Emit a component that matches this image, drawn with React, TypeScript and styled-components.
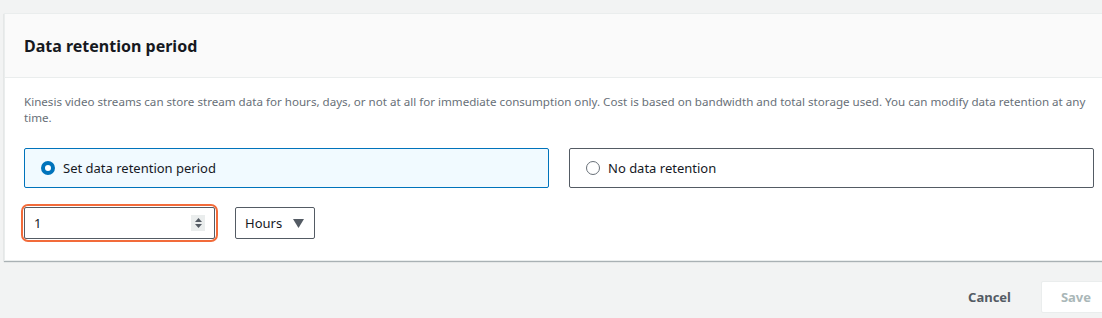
import React from 'react'
import styled, { createGlobalStyle } from 'styled-components'

const GlobalStyle = createGlobalStyle`
  html, body {
    margin: 0;
    padding: 0;
    background: #f2f3f3;
    overflow: hidden;
  }
  body {
    font-family: "Noto Sans", "Open Sans", sans-serif;
    color: #16191f;
  }
`

const App = () => {
  return (
    <Page>
      <GlobalStyle />
      <Card>
        <CardHeader>
          <Title>Data retention period</Title>
        </CardHeader>
        <CardBody>
          <Description>
            Kinesis video streams can store stream data for hours, days, or not at all for immediate
            consumption only. Cost is based on bandwidth and total storage used. You can modify data
            retention at any time.
          </Description>
          <Tiles>
            <Tile selected>
              <Radio selected />
              <TileLabel>Set data retention period</TileLabel>
            </Tile>
            <Tile>
              <Radio />
              <TileLabel>No data retention</TileLabel>
            </Tile>
          </Tiles>
          <Controls>
            <FocusRing>
              <NumberBox>
                <NumberValue>1</NumberValue>
                <Spinner>
                  <svg width="9" height="12" viewBox="0 0 9 12">
                    <path d="M4.5 1 L8 5 H1 Z" fill="#545b64" />
                    <path d="M4.5 11 L8 7 H1 Z" fill="#545b64" />
                  </svg>
                </Spinner>
              </NumberBox>
            </FocusRing>
            <Select>
              <span>Hours</span>
              <svg width="11" height="9" viewBox="0 0 11 9">
                <path d="M0 0 H11 L5.5 9 Z" fill="#545b64" />
              </svg>
            </Select>
          </Controls>
        </CardBody>
      </Card>
      <Footer>
        <CancelButton>Cancel</CancelButton>
        <SaveButton>Save</SaveButton>
      </Footer>
    </Page>
  )
}

export default App

const Page = styled.div`
  width: 1102px;
  height: 318px;
  padding: 13px 0 0 4px;
  box-sizing: border-box;
  overflow: hidden;
`

const Card = styled.div`
  width: 1109px;
  background: #fff;
  border: 1px solid #eaeded;
  border-right: none;
  box-shadow: 0 1px 1px 0 rgba(0, 28, 36, 0.3);
  box-sizing: border-box;
`

const CardHeader = styled.div`
  height: 64px;
  background: #fafafa;
  border-bottom: 1px solid #eaeded;
  display: flex;
  align-items: center;
  padding: 0 19px;
  box-sizing: border-box;
`

const Title = styled.h2`
  margin: 0;
  font-size: 16px;
  font-weight: 700;
  color: #16191f;
  padding-top: 1px;
`

const CardBody = styled.div`
  padding: 16px 19px 18px 19px;
`

const Description = styled.p`
  margin: 0;
  font-size: 11.6px;
  line-height: 16px;
  color: #687078;
  width: 1072px;
`

const Tiles = styled.div`
  display: grid;
  grid-template-columns: 1fr 1fr;
  gap: 20px;
  margin-top: 22px;
  width: 1070px;
`

const Tile = styled.div<{ selected?: boolean }>`
  height: 40px;
  box-sizing: border-box;
  border: 1px solid ${(p) => (p.selected ? '#0073bb' : '#545b64')};
  background: ${(p) => (p.selected ? '#f1faff' : '#fff')};
  border-radius: 2px;
  display: flex;
  align-items: center;
  padding-left: 16px;
  gap: 8px;
`

const Radio = styled.span<{ selected?: boolean }>`
  width: 14px;
  height: 14px;
  border-radius: 50%;
  box-sizing: border-box;
  border: ${(p) => (p.selected ? '4px solid #0073bb' : '1px solid #687078')};
  background: #fff;
  flex-shrink: 0;
`

const TileLabel = styled.span`
  font-size: 13px;
  color: #16191f;
`

const Controls = styled.div`
  display: flex;
  align-items: center;
  gap: 17px;
  margin-top: 16px;
`

const FocusRing = styled.div`
  padding: 1px;
  border: 2px solid #f26b3a;
  border-radius: 7px;
  margin-left: -3px;
`

const NumberBox = styled.div`
  width: 191px;
  height: 32px;
  box-sizing: border-box;
  border: 1px solid #545b64;
  border-radius: 2px;
  display: flex;
  align-items: center;
  justify-content: space-between;
  padding: 0 9px 0 9px;
`

const NumberValue = styled.span`
  font-size: 13px;
  color: #16191f;
`

const Spinner = styled.span`
  width: 14px;
  height: 16px;
  background: #eaeded;
  display: flex;
  align-items: center;
  justify-content: center;
`

const Select = styled.div`
  width: 80px;
  height: 32px;
  box-sizing: border-box;
  border: 1px solid #545b64;
  border-radius: 2px;
  display: flex;
  align-items: center;
  justify-content: space-between;
  padding: 0 10px 0 9px;
  font-size: 13px;
  color: #16191f;
`

const Footer = styled.div`
  display: flex;
  justify-content: flex-end;
  align-items: center;
  gap: 30px;
  margin-top: 20px;
  margin-right: -9px;
`

const CancelButton = styled.span`
  font-size: 13px;
  font-weight: 700;
  color: #545b64;
`

const SaveButton = styled.div`
  width: 70px;
  height: 32px;
  box-sizing: border-box;
  border: 1px solid #eaeded;
  border-radius: 2px;
  background: #fff;
  display: flex;
  align-items: center;
  justify-content: center;
  font-size: 13px;
  font-weight: 700;
  color: #aab7b8;
`
